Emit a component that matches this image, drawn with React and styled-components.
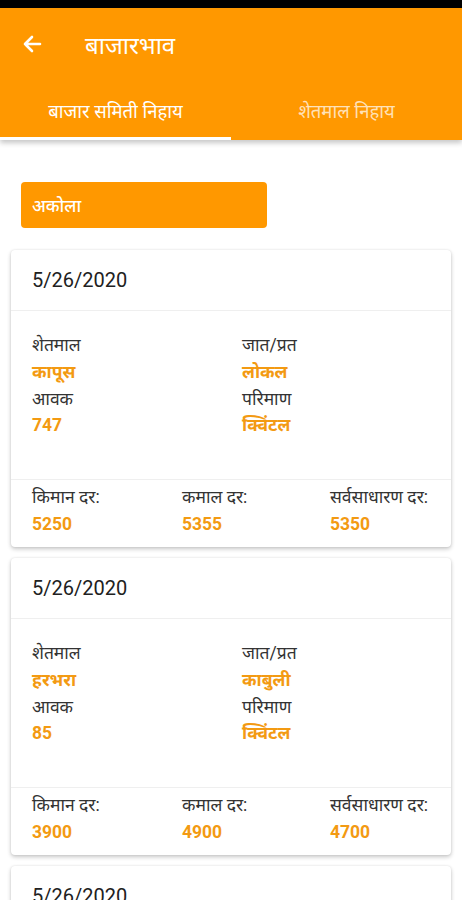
import React from "react";
import styled, { createGlobalStyle } from "styled-components";

const ORANGE = "#ff9800";

const GlobalStyle = createGlobalStyle`
  html, body {
    margin: 0;
    padding: 0;
    background: #ffffff;
    font-family: Roboto, "Noto Sans", sans-serif;
    overflow: hidden;
  }
`;

const Page = styled.div`
  width: 462px;
  height: 900px;
  overflow: hidden;
  background: #ffffff;
`;

const StatusBar = styled.div`
  height: 8px;
  background: #000000;
`;

const AppBar = styled.header`
  background: ${ORANGE};
  box-shadow: 0 3px 5px rgba(0, 0, 0, 0.22);
  position: relative;
  z-index: 2;
`;

const Toolbar = styled.div`
  height: 72px;
  display: flex;
  align-items: center;
  padding: 0 0 0 20px;
  gap: 41px;
  color: #ffffff;
`;

const Title = styled.h1`
  margin: 0;
  font-size: 24px;
  font-weight: 400;
  color: #ffffff;
`;

const Tabs = styled.nav`
  display: flex;
  height: 60px;
`;

const Tab = styled.div`
  flex: 1;
  display: flex;
  align-items: center;
  justify-content: center;
  font-size: 18.5px;
  font-weight: 400;
  color: ${(p) => (p.$active ? "#ffffff" : "rgba(255,255,255,0.72)")};
  border-bottom: 3px solid ${(p) => (p.$active ? "#ffffff" : "transparent")};
  padding-top: 3px;
`;

const Content = styled.main`
  padding: 42px 11px 0;
  display: flex;
  flex-direction: column;
  gap: 11px;
`;

const Select = styled.div`
  width: 246px;
  height: 46px;
  margin: 0 0 11px 10px;
  background: ${ORANGE};
  border-radius: 4px;
  display: flex;
  align-items: center;
  padding-left: 11px;
  box-sizing: border-box;
  color: #ffffff;
  font-size: 17.5px;
  font-weight: 500;
`;

const Card = styled.section`
  background: #ffffff;
  border-radius: 4px;
  box-shadow: 0 2px 4px rgba(0, 0, 0, 0.22), 0 0 2px rgba(0, 0, 0, 0.1);
`;

const CardHeader = styled.div`
  height: 61px;
  display: flex;
  align-items: center;
  padding: 0 21px;
  font-size: 20px;
  color: #212121;
  border-bottom: 1px solid #efefef;
  box-sizing: border-box;
`;

const CardBody = styled.div`
  height: 169px;
  padding: 21px 21px 0;
  box-sizing: border-box;
  display: grid;
  grid-template-columns: 210px 1fr;
  align-content: start;
  border-bottom: 1px solid #efefef;
`;

const Field = styled.div`
  display: flex;
  flex-direction: column;
`;

const Label = styled.span`
  font-size: 17.5px;
  line-height: 26.5px;
  color: #333333;
`;

const Value = styled.span`
  font-size: 17.5px;
  line-height: 27px;
  font-weight: 700;
  color: #f39a12;
`;

const CardFooter = styled.div`
  height: 67px;
  padding: 4px 21px 0;
  box-sizing: border-box;
  display: grid;
  grid-template-columns: 150px 148px 1fr;
`;

const Arrow = () => (
  <svg width="24" height="24" viewBox="0 0 24 24" fill="none">
    <path d="M20 12H5M12 5l-7 7 7 7" stroke="#fff" strokeWidth="2.6" strokeLinecap="round" strokeLinejoin="round" />
  </svg>
);

const rows = [
  { date: "5/26/2020", crop: "कापूस", variety: "लोकल", arrival: "747", unit: "क्विंटल", min: "5250", max: "5355", avg: "5350" },
  { date: "5/26/2020", crop: "हरभरा", variety: "काबुली", arrival: "85", unit: "क्विंटल", min: "3900", max: "4900", avg: "4700" },
  { date: "5/26/2020", crop: "तूर", variety: "लाल", arrival: "120", unit: "क्विंटल", min: "4800", max: "5200", avg: "5000" },
];

const RateCard = ({ r }) => (
  <Card>
    <CardHeader>{r.date}</CardHeader>
    <CardBody>
      <Field>
        <Label>शेतमाल</Label>
        <Value>{r.crop}</Value>
        <Label>आवक</Label>
        <Value>{r.arrival}</Value>
      </Field>
      <Field>
        <Label>जात/प्रत</Label>
        <Value>{r.variety}</Value>
        <Label>परिमाण</Label>
        <Value>{r.unit}</Value>
      </Field>
    </CardBody>
    <CardFooter>
      <Field>
        <Label>किमान दर:</Label>
        <Value>{r.min}</Value>
      </Field>
      <Field>
        <Label>कमाल दर:</Label>
        <Value>{r.max}</Value>
      </Field>
      <Field>
        <Label>सर्वसाधारण दर:</Label>
        <Value>{r.avg}</Value>
      </Field>
    </CardFooter>
  </Card>
);

export default function App() {
  return (
    <Page>
      <GlobalStyle />
      <StatusBar />
      <AppBar>
        <Toolbar>
          <Arrow />
          <Title>बाजारभाव</Title>
        </Toolbar>
        <Tabs>
          <Tab $active>बाजार समिती निहाय</Tab>
          <Tab>शेतमाल निहाय</Tab>
        </Tabs>
      </AppBar>
      <Content>
        <Select>अकोला</Select>
        {rows.map((r, i) => (
          <RateCard key={i} r={r} />
        ))}
      </Content>
    </Page>
  );
}
